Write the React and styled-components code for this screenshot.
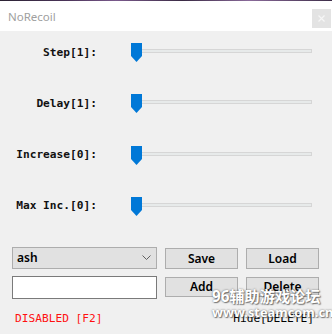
import React from 'react';
import styled, { createGlobalStyle } from 'styled-components';

const GlobalStyle = createGlobalStyle`
  html, body {
    margin: 0;
    padding: 0;
    background: #f0f0f0;
  }
`;

const Window = styled.div`
  width: 332px;
  height: 334px;
  display: flex;
  flex-direction: column;
  position: relative;
  overflow: hidden;
  background: #f0f0f0;
`;

const TopStrip = styled.div`
  height: 1px;
  background: linear-gradient(
    90deg,
    #2b2233 0%,
    #4a3358 20%,
    #7a5a8c 35%,
    #3a2a44 55%,
    #8a6a9a 75%,
    #3d2d48 100%
  );
`;

const TitleBar = styled.div`
  height: 30px;
  background: #ffffff;
  display: flex;
  align-items: center;
  justify-content: space-between;
  padding-left: 8px;
`;

const Title = styled.span`
  font-family: 'Noto Sans', 'Liberation Sans', sans-serif;
  font-size: 11.5px;
  color: #a0a0a0;
`;

const CloseButton = styled.div`
  width: 19px;
  height: 19px;
  margin-right: 1px;
  margin-top: 5px;
  background: #e3e3e3;
  display: flex;
  align-items: center;
  justify-content: center;
`;

const Body = styled.div`
  flex: 1;
  display: flex;
  flex-direction: column;
  padding: 11px 13px 0 12px;
`;

const SliderList = styled.div`
  display: flex;
  flex-direction: column;
  gap: 31.3px;
`;

const SliderRow = styled.div`
  height: 20px;
  display: grid;
  grid-template-columns: 85px 181px;
  column-gap: 34px;
  align-items: center;
`;

const Label = styled.span`
  font-family: 'DejaVu Sans Mono', 'Liberation Mono', monospace;
  font-weight: bold;
  font-size: 11.2px;
  color: #111;
  text-align: right;
  white-space: nowrap;
`;

const Slider = styled.div`
  position: relative;
  height: 20px;
  display: flex;
  align-items: center;
`;

const Track = styled.div`
  flex: 1;
  height: 2px;
  margin-left: 2px;
  margin-top: -2px;
  background: #e7eaea;
  border: 1px solid #d6d6d6;
`;

const Thumb = styled.svg`
  position: absolute;
  left: 0;
  top: 1px;
`;

const Controls = styled.div`
  margin-top: 31px;
  display: grid;
  grid-template-columns: 145px 73px 73px;
  grid-template-rows: 22px 23px;
  column-gap: 8px;
  row-gap: 7px;
`;

const Combo = styled.div`
  box-sizing: border-box;
  border: 1px solid #adadad;
  background: #e1e1e1;
  display: flex;
  align-items: center;
  justify-content: space-between;
  padding: 0 5px 0 4px;
`;

const ComboText = styled.span`
  font-family: 'Noto Sans', 'Liberation Sans', sans-serif;
  font-weight: 600;
  font-size: 12px;
  color: #000;
`;

const TextInput = styled.div`
  box-sizing: border-box;
  border: 1px solid #7a7a7a;
  background: #ffffff;
`;

const Button = styled.div`
  box-sizing: border-box;
  height: ${props => props.h || 21}px;
  margin-top: ${props => props.mt || 1}px;
  border: 1px solid #adadad;
  background: #e1e1e1;
  display: flex;
  align-items: center;
  justify-content: center;
  font-family: 'Noto Sans', 'Liberation Sans', sans-serif;
  font-weight: 600;
  font-size: 12px;
  color: #000;
`;

const StatusRow = styled.div`
  margin-top: 13px;
  display: flex;
  justify-content: space-between;
  padding: 0 5px 0 3px;
`;

const Status = styled.span`
  font-family: 'DejaVu Sans Mono', 'Liberation Mono', monospace;
  font-size: 11.2px;
  line-height: 14px;
  color: ${props => props.color || '#000'};
`;

const Watermark = styled.div`
  position: absolute;
  left: 212px;
  top: 287px;
  display: flex;
  flex-direction: column;
  align-items: flex-start;
  color: #ffffff;
  text-shadow: 0 0 2px rgba(70, 70, 70, 0.8), 1px 1px 1px rgba(60, 60, 60, 0.6);
  pointer-events: none;
`;

const MarkLine = styled.span`
  font-family: 'Noto Sans', 'Noto Sans CJK SC', sans-serif;
  font-weight: bold;
  font-size: ${props => props.size}px;
  line-height: ${props => props.lh}px;
  white-space: nowrap;
`;

const sliders = [
  { label: 'Step[1]:' },
  { label: 'Delay[1]:' },
  { label: 'Increase[0]:' },
  { label: 'Max Inc.[0]:' },
];

const App = () => {
  return (
    <Window>
      <GlobalStyle />
      <TopStrip />
      <TitleBar>
        <Title>NoRecoil</Title>
        <CloseButton>
          <svg width="7" height="7" viewBox="0 0 7 7">
            <path d="M0.5 0.5 L6.5 6.5 M6.5 0.5 L0.5 6.5" stroke="#f6f6f6" strokeWidth="1.2" />
          </svg>
        </CloseButton>
      </TitleBar>
      <Body>
        <SliderList>
          {sliders.map(s => (
            <SliderRow key={s.label}>
              <Label>{s.label}</Label>
              <Slider>
                <Track />
                <Thumb width="11" height="19" viewBox="0 0 11 19">
                  <polygon points="0,0 11,0 11,13 5.5,19 0,13" fill="#0078d7" />
                </Thumb>
              </Slider>
            </SliderRow>
          ))}
        </SliderList>
        <Controls>
          <Combo>
            <ComboText>ash</ComboText>
            <svg width="9" height="5" viewBox="0 0 9 5">
              <path d="M0.5 0.5 L4.5 4.5 L8.5 0.5" fill="none" stroke="#606060" strokeWidth="1" />
            </svg>
          </Combo>
          <Button>Save</Button>
          <Button>Load</Button>
          <TextInput />
          <Button h={20}>Add</Button>
          <Button h={20}>Delete</Button>
        </Controls>
        <StatusRow>
          <Status color="#ff1010">DISABLED [F2]</Status>
          <Status>Hide[DELETE]</Status>
        </StatusRow>
      </Body>
      <Watermark>
        <MarkLine size={15.2} lh={18}>96辅助游戏论坛</MarkLine>
        <MarkLine size={12.8} lh={15}>www.steamcom.cn</MarkLine>
      </Watermark>
    </Window>
  );
};

export default App;
